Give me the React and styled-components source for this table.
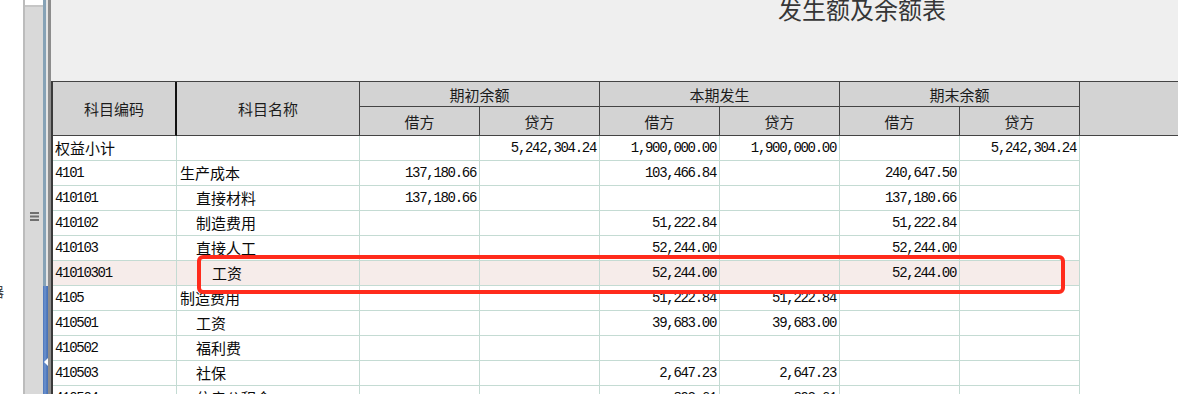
import styled, { createGlobalStyle } from 'styled-components';

const GlobalStyle = createGlobalStyle`
  html, body {
    margin: 0;
    padding: 0;
    background: #ffffff;
  }
  * {
    box-sizing: border-box;
  }
`;

const COLUMNS = '124px 183px repeat(6, 120px) 1fr';

const rows = [
  { code: '权益小计', name: '', level: 1, values: ['', '5,242,304.24', '1,900,000.00', '1,900,000.00', '', '5,242,304.24'] },
  { code: '4101', name: '生产成本', level: 1, values: ['137,180.66', '', '103,466.84', '', '240,647.50', ''] },
  { code: '410101', name: '直接材料', level: 2, values: ['137,180.66', '', '', '', '137,180.66', ''] },
  { code: '410102', name: '制造费用', level: 2, values: ['', '', '51,222.84', '', '51,222.84', ''] },
  { code: '410103', name: '直接人工', level: 2, values: ['', '', '52,244.00', '', '52,244.00', ''] },
  { code: '41010301', name: '工资', level: 3, selected: true, values: ['', '', '52,244.00', '', '52,244.00', ''] },
  { code: '4105', name: '制造费用', level: 1, values: ['', '', '51,222.84', '51,222.84', '', ''] },
  { code: '410501', name: '工资', level: 2, values: ['', '', '39,683.00', '39,683.00', '', ''] },
  { code: '410502', name: '福利费', level: 2, values: ['', '', '', '', '', ''] },
  { code: '410503', name: '社保', level: 2, values: ['', '', '2,647.23', '2,647.23', '', ''] },
  { code: '410504', name: '住房公积金', level: 2, values: ['', '', '892.61', '892.61', '', ''] },
];

export default function App() {
  return (
    <>
      <GlobalStyle />
      <Screen>
        <Gutter>
          <GutterText>器</GutterText>
        </Gutter>
        <SideStrip>
          <StripCap />
          <StripMenu>
            <svg width="9" height="9" viewBox="0 0 9 9">
              <rect x="0" y="0" width="9" height="2" fill="#6f6f6f" />
              <rect x="0" y="3.5" width="9" height="2" fill="#6f6f6f" />
              <rect x="0" y="7" width="9" height="2" fill="#6f6f6f" />
            </svg>
          </StripMenu>
        </SideStrip>
        <Splitter>
          <SplitterTop />
          <SplitterGrip>
            <GripArrow />
          </SplitterGrip>
        </Splitter>
        <Panel>
          <TitleBar>
            <Title>发生额及余额表</Title>
          </TitleBar>
          <GridWrap>
            <HeaderGrid>
              <HeadCell $row="1 / 3" $strong>科目编码</HeadCell>
              <HeadCell $row="1 / 3">科目名称</HeadCell>
              <HeadCell $col="3 / 5">期初余额</HeadCell>
              <HeadCell $col="5 / 7">本期发生</HeadCell>
              <HeadCell $col="7 / 9">期末余额</HeadCell>
              <HeadCell $row="1 / 3" $col="9 / 10" $filler />
              <HeadCell $rowStart={2}>借方</HeadCell>
              <HeadCell $rowStart={2}>贷方</HeadCell>
              <HeadCell $rowStart={2}>借方</HeadCell>
              <HeadCell $rowStart={2}>贷方</HeadCell>
              <HeadCell $rowStart={2}>借方</HeadCell>
              <HeadCell $rowStart={2}>贷方</HeadCell>
            </HeaderGrid>
            {rows.map((r) => (
              <BodyRow key={r.code}>
                <Cell $selected={r.selected} $mono={/^\d+$/.test(r.code)}>
                  {r.code}
                </Cell>
                <Cell $selected={r.selected} $level={r.level}>
                  {r.name}
                </Cell>
                {r.values.map((v, i) => (
                  <Cell key={i} $selected={r.selected} $mono $right>
                    {v}
                  </Cell>
                ))}
                <FillerCell />
              </BodyRow>
            ))}
            <Callout />
          </GridWrap>
        </Panel>
      </Screen>
    </>
  );
}

const Screen = styled.div`
  display: flex;
  width: 1178px;
  height: 394px;
  overflow: hidden;
  background: #ffffff;
`;

const Gutter = styled.div`
  width: 23px;
  flex-shrink: 0;
  overflow: hidden;
  padding-top: 283px;
  background: #ffffff;
`;

const GutterText = styled.div`
  margin-left: -10px;
  font-family: 'Noto Sans CJK SC', sans-serif;
  font-size: 14px;
  line-height: 16px;
  color: #444444;
`;

const SideStrip = styled.div`
  width: 20px;
  flex-shrink: 0;
  display: flex;
  flex-direction: column;
  align-items: center;
  background: #d9d9d9;
  border-left: 2px solid #bcbcbc;
`;

const StripCap = styled.div`
  width: 100%;
  height: 7px;
  background: #ffffff;
  border-bottom: 2px solid #c6c6c6;
`;

const StripMenu = styled.div`
  margin-top: 205px;
  display: flex;
  line-height: 0;
`;

const Splitter = styled.div`
  width: 5px;
  flex-shrink: 0;
  display: flex;
  flex-direction: column;
`;

const SplitterTop = styled.div`
  height: 286px;
  background: linear-gradient(to right, #86a2b6 0, #86a2b6 3px, #e4e4e4 3px);
`;

const SplitterGrip = styled.div`
  flex: 1;
  display: flex;
  flex-direction: column;
  align-items: flex-end;
  padding-top: 72px;
  background: linear-gradient(to right, #4a74b8 0, #6d93cf 2px, #4a74b8 4px);
`;

const GripArrow = styled.div`
  width: 0;
  height: 0;
  border-top: 4px solid transparent;
  border-bottom: 4px solid transparent;
  border-right: 4px solid #ffffff;
`;

const Panel = styled.div`
  flex: 1;
  display: flex;
  flex-direction: column;
  background: #efefef;
  border-left: 3px solid #8d8d8d;
  overflow: hidden;
`;

const TitleBar = styled.div`
  height: 81px;
  flex-shrink: 0;
  padding-left: 727px;
  overflow: hidden;
`;

const Title = styled.h1`
  margin: -3px 0 0;
  font-family: 'Noto Sans CJK SC', sans-serif;
  font-size: 24px;
  font-weight: 400;
  line-height: 24px;
  color: #363636;
  white-space: nowrap;
`;

const GridWrap = styled.div`
  position: relative;
  flex: 1;
  background: #ffffff;
  border-left: 2px solid #3a3a3a;
`;

const HeaderGrid = styled.div`
  display: grid;
  grid-template-columns: ${COLUMNS};
  grid-template-rows: 25px 29px;
  border-top: 1px solid #444444;
  background: #d3d3d3;
`;

const HeadCell = styled.div`
  grid-row: ${({ $row, $rowStart }) => $row || ($rowStart ? `${$rowStart} / ${$rowStart + 1}` : '1 / 2')};
  grid-column: ${({ $col }) => $col || 'auto'};
  display: flex;
  align-items: center;
  justify-content: center;
  font-family: 'Noto Sans CJK SC', sans-serif;
  font-size: 15px;
  color: #1c1c1c;
  background: #d3d3d3;
  border-right: ${({ $strong, $filler }) => ($filler ? 'none' : $strong ? '2px solid #111111' : '1px solid #444444')};
  border-bottom: 1px solid #444444;
`;

const BodyRow = styled.div`
  display: grid;
  grid-template-columns: ${COLUMNS};
  height: 25px;
`;

const Cell = styled.div`
  height: 25px;
  padding: 0 ${({ $right }) => ($right ? '3px' : '0')} 0
    ${({ $level, $right }) => ($right ? '0' : $level ? `${3 + ($level - 1) * 16}px` : '2px')};
  text-align: ${({ $right }) => ($right ? 'right' : 'left')};
  font-family: ${({ $mono }) => ($mono ? "'Liberation Mono', monospace" : "'Noto Sans CJK SC', sans-serif")};
  font-size: ${({ $mono }) => ($mono ? '14px' : '15px')};
  letter-spacing: ${({ $mono }) => ($mono ? '-1.3px' : '0')};
  line-height: 24px;
  color: #0a0a0a;
  white-space: nowrap;
  overflow: hidden;
  background: ${({ $selected }) => ($selected ? '#f6ecea' : '#ffffff')};
  border-right: 1px solid #c4dbd3;
  border-bottom: 1px solid #c4dbd3;
`;

const FillerCell = styled.div`
  background: #ffffff;
`;

const Callout = styled.div`
  position: absolute;
  left: 144px;
  top: 174px;
  width: 868px;
  height: 39px;
  border: 4px solid #ff2b1c;
  border-radius: 6px;
  pointer-events: none;
`;
